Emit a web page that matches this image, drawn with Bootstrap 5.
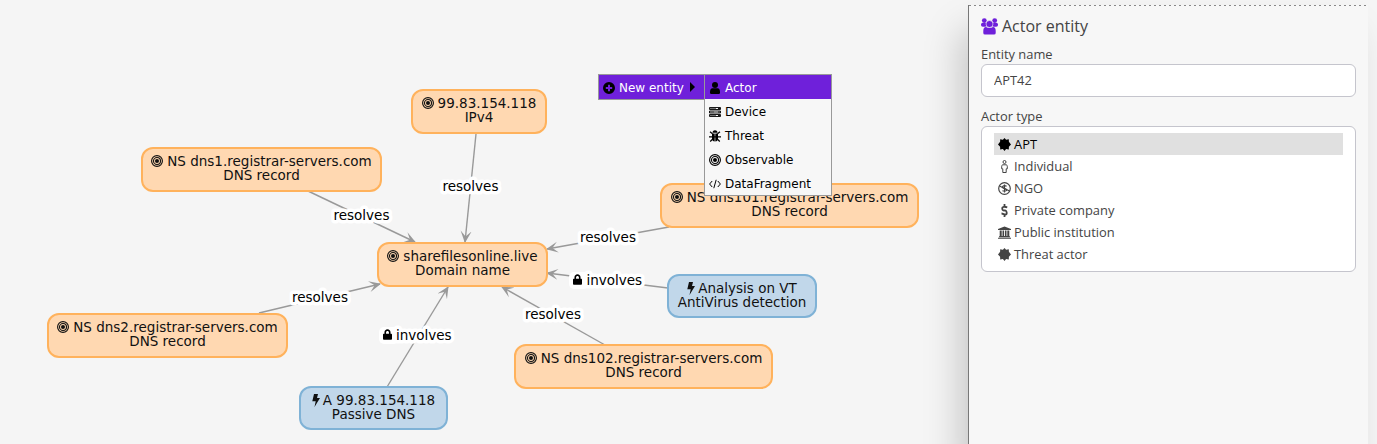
<!DOCTYPE html>
<html lang="en">
<head>
<meta charset="utf-8">
<meta name="viewport" content="width=device-width, initial-scale=1">
<title>Entity graph</title>
<link rel="stylesheet" href="https://cdn.jsdelivr.net/npm/bootstrap@5.3.0/dist/css/bootstrap.min.css">
<style>
  body { background: #f5f5f5; font-family: "Open Sans", sans-serif; font-size: 12.9px; line-height: 1.5; color: #444; }
  .graph { font-family: "DejaVu Sans", sans-serif; font-size: 13.5px; line-height: 13.5px; color: #111; }
  .edges { left: 0; top: 0; }
  .edges path { stroke: #999; stroke-width: 1.4; fill: none; }
  .edges text { fill: #000; stroke: #fff; stroke-width: 7px; stroke-linejoin: round; paint-order: stroke; }
  .node { position: absolute; height: 45px; padding-top: 6px; border: 2px solid #ffb25c; border-radius: 12px; background: #ffd8b1; text-align: center; white-space: nowrap; }
  .node.event { height: 44px; background: #c1d7ea; border-color: #7fb2d6; }
  .ico { width: 12px; height: 12px; fill: currentColor; flex: none; }
  .node .ico { vertical-align: -1px; margin-right: 4px; }
  .node.event .ico { width: 8px; height: 13px; margin-right: 3px; vertical-align: -2px; }
  .ctx { position: absolute; left: 598px; top: 74px; font: 12px/24px "DejaVu Sans", sans-serif; color: #000; }
  .ctx-root { width: 107px; height: 26px; border: 1px solid #999; background: #6f20da; }
  .ctx-sub { width: 128px; margin-left: -1px; border: 1px solid #999; background: #f7f7f7; }
  .ctx-row { height: 24px; padding: 2px 0 0 4px; gap: 4px; }
  .ctx-row .ico { margin-top: -1px; }
  .ctx-on { background: #6f20da; }
  .ctx-on span { color: #fff; }
  .arrow { border: 5px solid transparent; border-left-color: #000; border-right: 0; margin: -2px 0 0 2px; }
  .side { width: 400px; height: 460px; margin: 5px 9px 0 0; padding: 9px 12px; border-left: 1px solid #777; background: repeating-linear-gradient(90deg, #888 0 2px, transparent 2px 5px) top/100% 1px no-repeat #f7f7f7; box-shadow: -12px 20px 36px -6px rgba(0,0,0,.21); }
  .side h1 { font-size: 16px; line-height: 24px; font-weight: 400; margin: 0 0 7px; gap: 4px; }
  .side h1 .ico { width: 17px; height: 17px; color: #6f20da; }
  .side label { line-height: 19px; height: 19px; margin: 0; display: block; }
  .side .form-control { width: 375px; font-size: 12.9px; color: #444; border-color: #c5c5cd; border-radius: 6px; }
  .side .name { height: 33px; padding: 4px 12px 6px; margin-bottom: 10px; }
  .side .types { height: 146px; padding: 6px 12px; }
  .type { height: 22px; line-height: 22px; padding-left: 4px; gap: 3px; }
  .type.on { background: #e0e0e0; color: #000; }
  .type .ico { width: 13px; height: 13px; margin-top: 1px; }
</style>
<script src="https://cdn.jsdelivr.net/npm/bootstrap@5.3.0/dist/js/bootstrap.bundle.min.js"></script>
</head>
<body class="vh-100 overflow-hidden">
<svg class="d-none">
  <symbol id="target" viewBox="0 0 12 12"><g fill="none" stroke="currentColor"><circle cx="6" cy="6" r="5.4" stroke-width="1.15"/><circle cx="6" cy="6" r="3.500" stroke-width="1.100"/></g><circle cx="6" cy="6" r="2"/></symbol>
  <symbol id="bolt" viewBox="0 0 8 13"><path d="M2 0h4L5 4h3L2.500 13l1.200-5.700H.3z"/></symbol>
  <symbol id="lock" viewBox="0 0 448 512"><path d="M400 224h-24v-72C376 68 308 0 224 0S72 68 72 152v72H48c-26 0-48 22-48 48v192c0 26 22 48 48 48h352c26 0 48-22 48-48V272c0-26-22-48-48-48zm-104 0H152v-72c0-40 32-72 72-72s72 32 72 72z" style="fill:#000;stroke:none"/></symbol>
  <symbol id="plus" viewBox="0 0 12 12"><path fill-rule="evenodd" d="M6 0a6 6 0 1 0 0 12A6 6 0 0 0 6 0zM5 2.800h2V5h2.200v2H7v2.200H5V7H2.800V5H5z"/></symbol>
  <symbol id="user" viewBox="0 0 12 12"><circle cx="6" cy="3" r="3"/><path d="M3.500 6.200h5Q11 6.500 11 10v.8q0 1.200-1.200 1.200H2.200Q1 12 1 10.800V10q0-3.500 2.500-3.800z"/></symbol>
  <symbol id="server" viewBox="0 0 12 12"><g fill="none" stroke="currentColor" stroke-width=".9"><path d="M.5 1.500h11v2H.5zM.5 5h11v2H.5zM.5 8.500h11v2H.5z"/><path d="M1 2.500h6M1 6h4M1 9.500h6" stroke-opacity=".6"/><path d="M9 2.500h2M9 6h2M9 9.500h2"/></g></symbol>
  <symbol id="bug" viewBox="0 0 12 12"><path d="M3.500 2.700a2.500 2.500 0 0 1 5 0z"/><path d="M3 3.500h2.700V11.500Q3 11 3 8.500zM6.300 3.500H9v5q0 2.500-2.700 3z"/><path d="M1 1.800l2.500 2M11 1.800l-2.500 2M0 6.800h12M1.200 11.500L3.800 9M10.800 11.500L8.200 9" fill="none" stroke="currentColor" stroke-width="1.200"/></symbol>
  <symbol id="code" viewBox="0 0 12 12"><path d="M3.200 3L.6 6l2.600 3M8.800 3l2.600 3-2.600 3M7.200 1.800L4.800 10.200" fill="none" stroke="currentColor" stroke-width="1"/></symbol>
  <symbol id="cert" viewBox="0 0 13 13"><path d="M6.500 0l1.600 1.800 2.700-.6.100 2.500L13 6.500l-2.100 2.300-.1 2.600-2.700-.3L6.500 13l-1.600-1.900-2.700.3-.1-2.600L0 6.500l2.100-2.800.1-2.500 2.700.6z"/></symbol>
  <symbol id="person" viewBox="0 0 13 13"><g fill="none" stroke="currentColor" stroke-width="1"><circle cx="6.500" cy="2" r="1.500"/><path d="M4.700 4.800h3.600q1 .3 1 1.500v2.500H8.200v3.700H4.800V8.800H3.700V6.300q0-1.200 1-1.500z"/></g></symbol>
  <symbol id="ngo" viewBox="0 0 13 13"><g fill="none" stroke="currentColor"><circle cx="6.500" cy="6.500" r="5.800" stroke-width="1.200"/><path d="M1.500 4l10 5" stroke-width="1.200"/><path d="M8.600 4.300Q6.500 3 4.900 4.200T6.500 6.500 8.300 8.600 4.400 8.800M6.500 2.500v8" stroke-width="1.100"/></g></symbol>
  <symbol id="dollar" viewBox="0 0 13 13"><path d="M9.200 3.600Q7.500 2.500 5.700 2.800T4.300 5 6.500 6.500 8.700 8.600 6.500 10.300 3.500 9.500M6.500 0v3M6.500 10v3" fill="none" stroke="currentColor" stroke-width="1.800"/></symbol>
  <symbol id="bank" viewBox="0 0 13 13"><path d="M6.500.5L13 3v1H0V3zM1.700 4.500h2V10h.8V4.500h1.600V10h.9V4.500h1.500V10h.8V4.500h2V10l.7.500v.7H1v-.7l.7-.5zM0 11.700h13v1H0z"/></symbol>
  <symbol id="users" viewBox="0 0 17 17"><circle cx="3.300" cy="2.600" r="2.400"/><circle cx="13.700" cy="2.600" r="2.400"/><rect y="4.800" width="6" height="4" rx="1.800"/><rect x="11" y="4.800" width="6" height="4" rx="1.800"/><path d="M5 9q3.500 1.800 7 0 2.700.2 2.700 3.800v2.200q0 1.500-1.700 1.500H4Q2.300 16.500 2.300 15v-2.200Q2.300 9.200 5 9z"/><circle cx="8.500" cy="6" r="3.500" stroke="#f7f7f7" stroke-width=".6"/></symbol>
</svg>
<main class="d-flex h-100 justify-content-end position-relative">
  <div class="graph flex-fill">
    <svg class="edges position-absolute" width="960" height="444">
      <defs><marker id="tip" markerUnits="userSpaceOnUse" markerWidth="14" markerHeight="12" refX="11" refY="6" orient="auto"><path d="M0 .5L12 6 0 11.500 5.500 6z" style="fill:#999;stroke:none"/></marker></defs>
      <g>
        <path d="M476 134L465 242" marker-end="url(#tip)"/>
        <path d="M308 191L415 242" marker-end="url(#tip)"/>
        <path d="M669 227L547 249" marker-end="url(#tip)"/>
        <path d="M668 288L547 273" marker-end="url(#tip)"/>
        <path d="M605 345L502 287" marker-end="url(#tip)"/>
        <path d="M387 387L448 287" marker-end="url(#tip)"/>
        <path d="M259 313L380 284" marker-end="url(#tip)"/>
      </g>
      <text x="442.500" y="191">resolves</text>
      <text x="333.500" y="220">resolves</text>
      <text x="580" y="242">resolves</text>
      <text x="525" y="319">resolves</text>
      <text x="292" y="302">resolves</text>
      <rect x="569" y="272" width="20" height="17" rx="5" fill="#fff"/>
      <text x="586.500" y="284.500">involves</text>
      <use href="#lock" x="573" y="274" width="9" height="11"/>
      <rect x="379" y="327" width="20" height="17" rx="5" fill="#fff"/>
      <text x="396" y="340">involves</text>
      <use href="#lock" x="383" y="329" width="9" height="11"/>
    </svg>
    <div class="node" style="left:411px;top:89px;width:136px"><svg class="ico"><use href="#target"/></svg>99.83.154.118<br>IPv4</div>
    <div class="node" style="left:141px;top:147px;width:241px"><svg class="ico"><use href="#target"/></svg>NS dns1.registrar-servers.com<br>DNS record</div>
    <div class="node" style="left:377px;top:242px;width:171px"><svg class="ico"><use href="#target"/></svg>sharefilesonline.live<br>Domain name</div>
    <div class="node" style="left:47px;top:313px;width:241px"><svg class="ico"><use href="#target"/></svg>NS dns2.registrar-servers.com<br>DNS record</div>
    <div class="node" style="left:660px;top:183px;width:259px"><svg class="ico"><use href="#target"/></svg>NS dns101.registrar-servers.com<br>DNS record</div>
    <div class="node" style="left:514px;top:344px;width:259px"><svg class="ico"><use href="#target"/></svg>NS dns102.registrar-servers.com<br>DNS record</div>
    <div class="node event" style="left:667px;top:274px;width:150px"><svg class="ico"><use href="#bolt"/></svg>Analysis on VT<br>AntiVirus detection</div>
    <div class="node event" style="left:299px;top:386px;width:149px"><svg class="ico"><use href="#bolt"/></svg>A 99.83.154.118<br>Passive DNS</div>
  </div>
  <nav class="ctx d-flex align-items-start">
    <div class="ctx-root"><div class="ctx-row ctx-on d-flex align-items-center"><svg class="ico"><use href="#plus"/></svg><span>New entity</span><i class="arrow"></i></div></div>
    <div class="ctx-sub">
      <div class="ctx-row ctx-on d-flex align-items-center"><svg class="ico"><use href="#user"/></svg><span>Actor</span></div>
      <div class="ctx-row d-flex align-items-center"><svg class="ico"><use href="#server"/></svg><span>Device</span></div>
      <div class="ctx-row d-flex align-items-center"><svg class="ico"><use href="#bug"/></svg><span>Threat</span></div>
      <div class="ctx-row d-flex align-items-center"><svg class="ico"><use href="#target"/></svg><span>Observable</span></div>
      <div class="ctx-row d-flex align-items-center"><svg class="ico"><use href="#code"/></svg><span>DataFragment</span></div>
    </div>
  </nav>
  <aside class="side flex-shrink-0">
    <h1 class="d-flex align-items-center"><svg class="ico"><use href="#users"/></svg>Actor entity</h1>
    <label for="name">Entity name</label>
    <input id="name" class="form-control name" value="APT42">
    <label>Actor type</label>
    <div class="form-control types">
      <div class="type on d-flex align-items-center"><svg class="ico"><use href="#cert"/></svg>APT</div>
      <div class="type d-flex align-items-center"><svg class="ico"><use href="#person"/></svg>Individual</div>
      <div class="type d-flex align-items-center"><svg class="ico"><use href="#ngo"/></svg>NGO</div>
      <div class="type d-flex align-items-center"><svg class="ico"><use href="#dollar"/></svg>Private company</div>
      <div class="type d-flex align-items-center"><svg class="ico"><use href="#bank"/></svg>Public institution</div>
      <div class="type d-flex align-items-center"><svg class="ico"><use href="#cert"/></svg>Threat actor</div>
    </div>
  </aside>
</main>
</body>
</html>
